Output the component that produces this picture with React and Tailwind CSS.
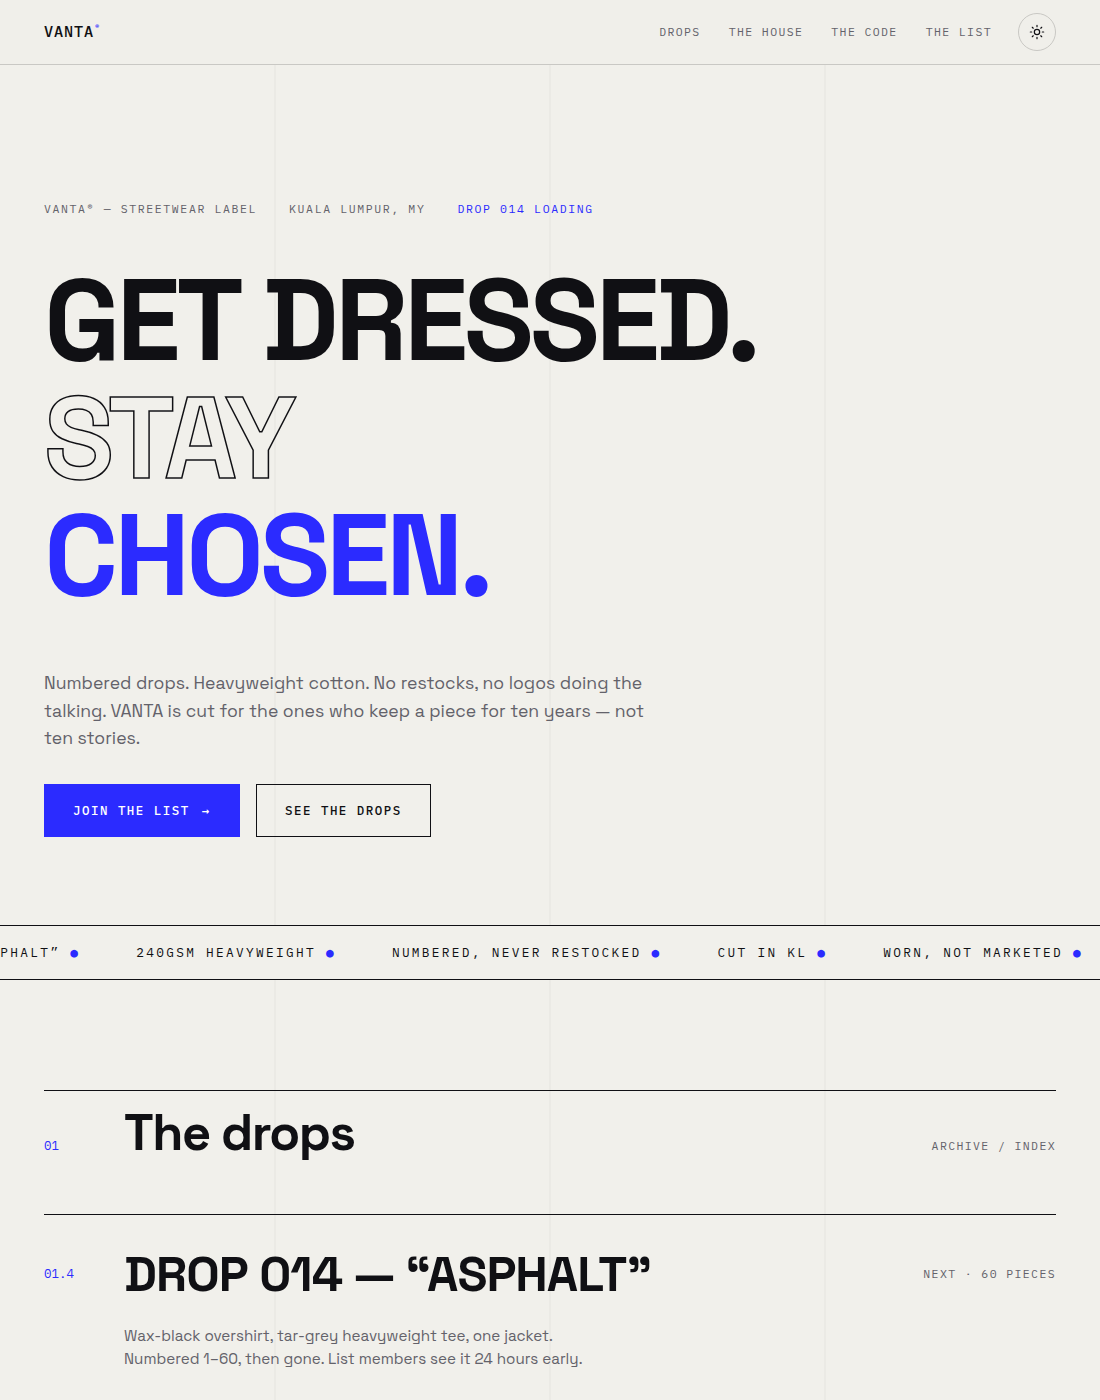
import React from "react";

const navLinks = ["Drops", "The House", "The Code", "The List"];

const marquee = [
  "Drop 014 — “Asphalt”",
  "240gsm heavyweight",
  "Numbered, never restocked",
  "Cut in KL",
  "Worn, not marketed",
];

function SunIcon() {
  return (
    <svg viewBox="0 0 24 24" className="size-4" fill="none" stroke="currentColor" strokeWidth="1.8" strokeLinecap="round">
      <circle cx="12" cy="12" r="4" />
      <path d="M12 2v2M12 20v2M4.93 4.93l1.41 1.41M17.66 17.66l1.41 1.41M2 12h2M20 12h2M6.34 17.66l-1.41 1.41M19.07 4.93l-1.41 1.41" />
    </svg>
  );
}

function Header() {
  return (
    <header className="relative z-10 flex h-[65px] items-center justify-between border-b border-[#c9c8c4] bg-[#f0efea] px-11">
      <a className="text-[15.2px] leading-none font-medium tracking-[0.06em]">
        VANTA<sup className="-top-[6px] text-[9.5px] tracking-normal text-[#2b2bff]">®</sup>
      </a>
      <div className="flex items-center gap-[26px]">
        <nav className="flex gap-7 text-[11.52px] tracking-[0.12em] text-[#63626a] uppercase">
          {navLinks.map((l) => (
            <a key={l}>{l}</a>
          ))}
        </nav>
        <button className="flex size-[38px] items-center justify-center rounded-full border border-[#c9c8c4]">
          <SunIcon />
        </button>
      </div>
    </header>
  );
}

function Hero() {
  return (
    <section className="px-11 pt-[136px] pb-[88px]">
      <div className="flex h-4 items-center gap-8 text-[11.52px] tracking-[0.14em] text-[#63626a] uppercase">
        <span>Vanta® — Streetwear Label</span>
        <span>Kuala Lumpur, MY</span>
        <span className="text-[#2b2bff]">Drop 014 loading</span>
      </div>
      <h1 className="mt-[45px] font-['Space_Grotesk','Inter',sans-serif] text-[115.5px] leading-[117.5px] font-bold tracking-[-0.035em]">
        <span className="block">GET DRESSED.</span>
        <span className="block text-transparent [-webkit-text-stroke:1.5px_#101014]">STAY</span>
        <span className="block text-[#2b2bff]">CHOSEN.</span>
      </h1>
      <p className="mt-[55.7px] w-[612px] font-['Space_Grotesk','Inter',sans-serif] text-[17.6px] leading-[27.5px] text-[#63626a]">
        Numbered drops. Heavyweight cotton. No restocks, no logos doing the talking. VANTA is cut for the ones who keep a
        piece for ten years — not ten stories.
      </p>
      <div className="mt-[31.3px] flex gap-4 text-[12.48px] font-medium tracking-[0.12em] uppercase">
        <a className="flex h-[53px] w-[196px] items-center gap-3 border border-[#2b2bff] bg-[#2b2bff] px-7 whitespace-nowrap text-white">
          <span>Join the list</span>
          <span className="pt-px font-['DejaVu_Sans_Mono',monospace] font-bold">→</span>
        </a>
        <a className="flex h-[53px] w-[175px] items-center border border-[#101014] px-7 whitespace-nowrap">See the drops</a>
      </div>
    </section>
  );
}

function Marquee() {
  return (
    <div className="relative flex h-[55px] items-center justify-end overflow-hidden border-y border-[#101014] bg-[#f1f0eb] text-[12.8px] tracking-[0.18em] whitespace-nowrap uppercase">
      <div className="-mr-[39px] flex pt-px leading-5">
        {marquee.map((m) => (
          <span key={m} className="mr-14">
            {m} <span className="font-['DejaVu_Sans_Mono',monospace] text-[#2b2bff]">●</span>
          </span>
        ))}
      </div>
    </div>
  );
}

function Drops() {
  return (
    <section className="px-11 pt-[110px]">
      <div className="flex h-[124px] items-baseline border-t border-[#101014] pt-[11px]">
        <span className="w-20 text-[12.48px] text-[#2b2bff]">01</span>
        <h2 className="flex-1 font-['Space_Grotesk','Inter',sans-serif] text-[50.6px] leading-[61px] font-bold tracking-[-0.03em]">The drops</h2>
        <span className="text-[11.52px] tracking-[0.12em] text-[#63626a] uppercase">Archive / Index</span>
      </div>
      <div className="flex border-t border-[#101014] pt-[33px]">
        <span className="w-20 pt-4 text-[12.48px] leading-[18px] text-[#2b2bff]">01.4</span>
        <div className="flex-1 font-['Space_Grotesk','Inter',sans-serif]">
          <h3 className="text-[49.5px] leading-[51px] font-bold tracking-[-0.02em]">DROP 014 — “ASPHALT”</h3>
          <p className="mt-[25px] w-[480px] text-[15.2px] leading-[23px] text-[#63626a]">
            Wax-black overshirt, tar-grey heavyweight tee, one jacket. Numbered 1–60, then gone. List members see it 24 hours
            early.
          </p>
        </div>
        <span className="pt-[17px] text-[11.52px] leading-[18px] tracking-[0.12em] text-[#63626a] uppercase">Next · 60 pieces</span>
      </div>
    </section>
  );
}

function GridLines() {
  return (
    <div className="absolute inset-0 -z-10 flex">
      <div className="w-[276px] border-r-2 border-[#ebeae5]" />
      <div className="w-[275px] border-r-2 border-[#ebeae5]" />
      <div className="w-[275px] border-r-2 border-[#ebeae5]" />
    </div>
  );
}

export default function App() {
  return (
    <div className="relative isolate h-[1400px] w-[1100px] overflow-hidden bg-[#f1f0eb] font-['IBM_Plex_Mono','Liberation_Mono',monospace] text-[#101014]">
      <GridLines />
      <Header />
      <Hero />
      <Marquee />
      <Drops />
    </div>
  );
}
